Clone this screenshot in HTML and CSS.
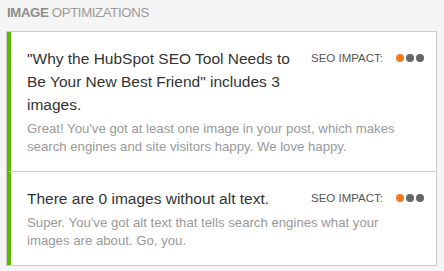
FILE: index.html
```html
<!DOCTYPE html>
<html lang="en">
<head>
  <meta charset="UTF-8">
  <meta name="viewport" content="width=device-width, initial-scale=1.0">
  <title>Image optimizations</title>
  <link rel="stylesheet" href="styles.css">
</head>
<body>
  <div class="section">
    <h3 class="section_title"><b>IMAGE</b> OPTIMIZATIONS</h3>
    <div class="card">
      <div class="item">
        <div class="item_head">
          <p class="item_title">"Why the HubSpot SEO Tool Needs to Be Your New Best Friend" includes 3 images.</p>
          <div class="impact">
            <span>SEO IMPACT:</span>
            <span class="dots"><i class="dot on"></i><i class="dot"></i><i class="dot"></i></span>
          </div>
        </div>
        <p class="item_desc">Great! You've got at least one image in your post, which makes search engines and site visitors happy. We love happy.</p>
      </div>
      <div class="item">
        <div class="item_head">
          <p class="item_title">There are 0 images without alt text.</p>
          <div class="impact">
            <span>SEO IMPACT:</span>
            <span class="dots"><i class="dot on"></i><i class="dot"></i><i class="dot"></i></span>
          </div>
        </div>
        <p class="item_desc">Super. You've got alt text that tells search engines what your images are about. Go, you.</p>
      </div>
    </div>
  </div>
</body>
</html>
```
FILE: styles.css
```css
body {
  margin: 0;
  background-color: #f5f5f5;
  font-family: "Liberation Sans", Arial, sans-serif;
}
.section {
  padding: 5px 7px 6px 6px;
}
.section_title {
  margin: 0 0 10px 1px;
  font-size: 13.2px;
  font-weight: normal;
  letter-spacing: -0.35px;
  line-height: 16px;
  color: #999;
}
.section_title b {
  font-weight: bold;
  color: #8c8c8c;
}
.card {
  background-color: white;
  border: 1px solid #ccc;
}
.item {
  border-left: 4px solid #5db900;
  padding: 15px 12px 15px 16px;
}
.item + .item {
  border-top: 1px solid #ccc;
}
.item_head {
  display: flex;
  align-items: flex-start;
}
.item_title {
  flex: 1;
  margin: 0;
  font-size: 15.5px;
  line-height: 23px;
  color: #333;
}
.impact {
  display: flex;
  align-items: center;
  margin-left: 14px;
  margin-top: 3px;
  font-size: 11.5px;
  line-height: 16px;
  color: #555;
}
.dots {
  display: flex;
  gap: 2px;
  margin-left: 13px;
}
.dot {
  width: 8px;
  height: 8px;
  border-radius: 50%;
  background-color: #666;
}
.dot.on {
  background-color: #f47a20;
}
.item_desc {
  margin: 4px 0 0;
  font-size: 13.2px;
  line-height: 18px;
  color: #999;
}
```
